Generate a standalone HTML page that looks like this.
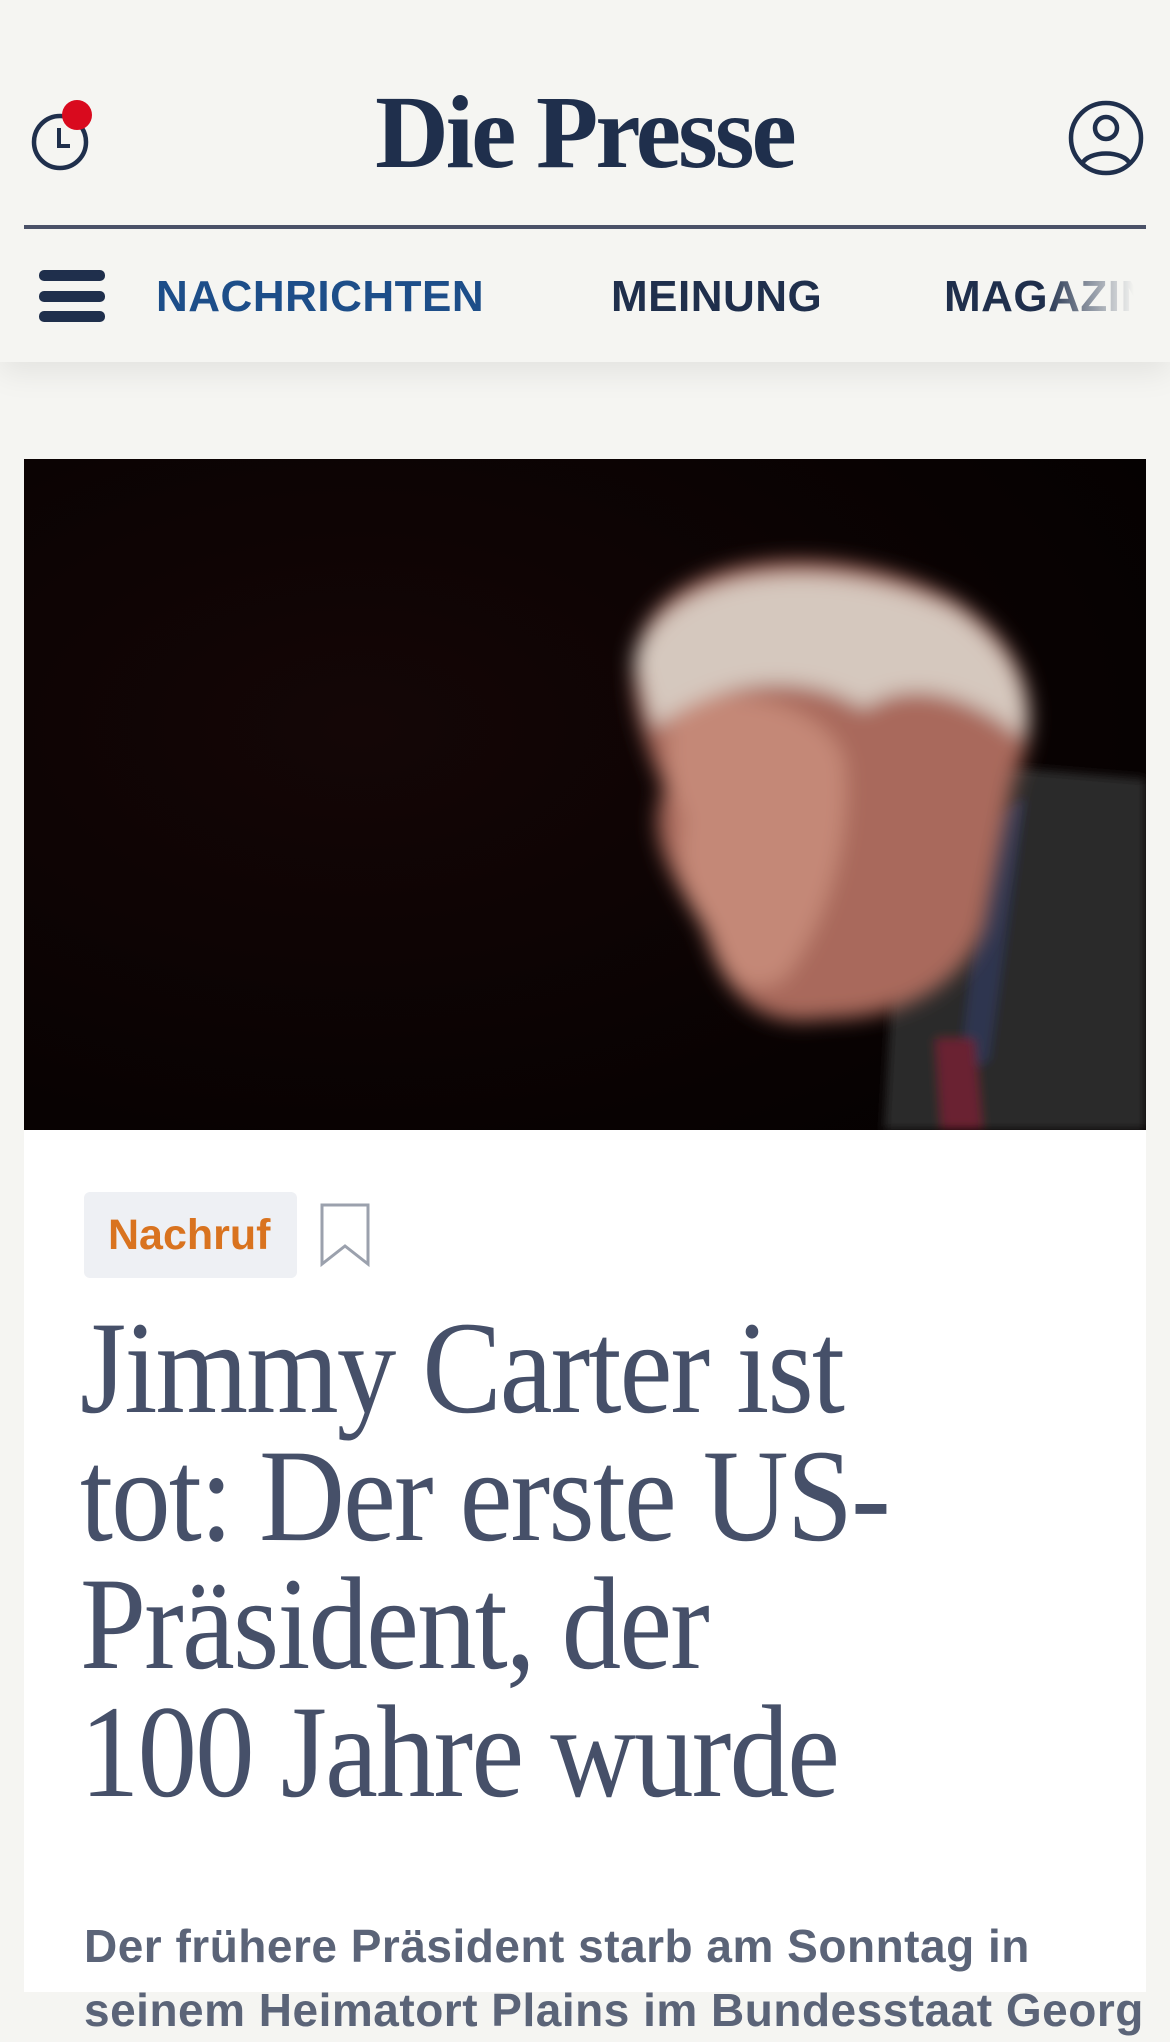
<!DOCTYPE html>
<html><head><meta charset="utf-8"><style>
*{margin:0;padding:0;box-sizing:border-box}
body{width:1170px;height:1992px;overflow:hidden;background:#f5f5f2;font-family:"Liberation Sans",sans-serif;position:relative}
.hdr{position:absolute;left:0;top:0;width:1170px;height:362px;background:#f5f5f2;box-shadow:0 10px 30px rgba(0,0,0,0.08)}
.logo{position:absolute;left:272px;top:78px;width:625px;text-align:center;white-space:nowrap;font-family:"Liberation Serif",serif;font-weight:bold;font-size:104px;color:#1f2f4c;letter-spacing:-3px;transform:scaleX(0.98);transform-origin:center;line-height:110px}
.rule{position:absolute;left:24px;top:225px;width:1122px;height:4px;background:#4a5168}
.nav{position:absolute;top:270px;font-weight:bold;font-size:44px;line-height:54px;letter-spacing:0.5px}
.card{position:absolute;left:24px;top:1130px;width:1122px;height:862px;background:#fff}
.tag{position:absolute;left:84px;top:1192px;width:213px;height:86px;border-radius:6px;background:#eef0f4;color:#d9731f;font-weight:bold;font-size:43px;line-height:86px;padding-left:24px}
h1{position:absolute;left:80px;top:1304px;font-family:"Liberation Serif",serif;font-weight:normal;font-size:132px;line-height:128px;color:#465069;letter-spacing:-2px;transform:scaleX(0.9);transform-origin:left;width:1000px;white-space:nowrap}
.sub{position:absolute;left:84px;top:1914px;font-size:46px;line-height:64px;color:#5b6478;font-weight:bold;width:1062px;overflow:hidden;letter-spacing:0.5px;white-space:nowrap}
</style></head><body>
<div class="hdr">
 <svg style="position:absolute;left:28px;top:98px" width="70" height="80" viewBox="0 0 70 80">
  <circle cx="32" cy="44" r="26" fill="none" stroke="#1f2f4c" stroke-width="4.5"/>
  <path d="M31 30 V48 H42" fill="none" stroke="#1f2f4c" stroke-width="4"/>
  <circle cx="49" cy="17" r="15" fill="#d90a1e"/>
 </svg>
 <div class="logo">Die Presse</div>
 <svg style="position:absolute;left:1066px;top:98px" width="80" height="80" viewBox="0 0 80 80">
  <circle cx="40" cy="40" r="35" fill="none" stroke="#1f2f4c" stroke-width="4.5"/>
  <circle cx="40" cy="30" r="11" fill="none" stroke="#1f2f4c" stroke-width="4.5"/>
  <path d="M16 66 C22 52 58 52 64 66" fill="none" stroke="#1f2f4c" stroke-width="4.5"/>
 </svg>
 <div class="rule"></div>
 <svg style="position:absolute;left:39px;top:268px" width="68" height="56">
  <rect x="0" y="2" width="66" height="11" rx="5" fill="#1f2f4c"/>
  <rect x="0" y="23" width="66" height="11" rx="5" fill="#1f2f4c"/>
  <rect x="0" y="43" width="66" height="11" rx="5" fill="#1f2f4c"/>
 </svg>
 <div class="nav" style="left:156px;color:#1d4e89">NACHRICHTEN</div>
 <div class="nav" style="left:611px;color:#1f2f4c">MEINUNG</div>
 <div class="nav" style="left:944px;color:#1f2f4c;width:200px;overflow:hidden;white-space:nowrap;-webkit-mask-image:linear-gradient(to right,#000 50%,transparent 95%)">MAGAZIN</div>
</div>
<svg style="position:absolute;left:24px;top:459px" width="1122" height="671" viewBox="0 0 1122 671">
 <defs>
  <filter id="b"><feGaussianBlur stdDeviation="10"/></filter>
  <filter id="b2"><feGaussianBlur stdDeviation="5"/></filter>
  <radialGradient id="bg" cx="0.3" cy="0.4" r="0.8"><stop offset="0" stop-color="#140606"/><stop offset="1" stop-color="#050101"/></radialGradient>
 </defs>
 <rect width="1122" height="671" fill="url(#bg)"/>
 <g filter="url(#b2)">
  <path d="M880 300 L1122 320 L1122 671 L860 671 Z" fill="#2c2b2b"/>
  <path d="M965 360 L1000 340 L965 600 L935 620 Z" fill="#2e3550"/>
  <path d="M912 580 L950 580 L958 671 L918 671 Z" fill="#6a2430"/>
 </g>
 <g filter="url(#b)">
  <path d="M620 170 C660 90 820 80 930 140 C1010 190 1020 260 990 320 L960 470 C930 540 860 560 800 560 C740 570 700 540 680 470 C650 420 620 380 640 330 C610 260 600 210 620 170 Z" fill="#a9695c"/>
  <path d="M650 250 C690 220 800 240 820 300 C830 380 800 470 760 520 C720 540 700 520 690 480 C660 440 650 400 660 360 C640 320 640 280 650 250 Z" fill="#c48877"/>
  <path d="M610 200 C640 110 800 90 930 150 C990 190 1010 240 1000 280 C940 230 880 220 840 250 C780 210 690 220 630 270 Z" fill="#d5c8be"/>
 </g>
</svg>
<div class="card"></div>
<div class="tag">Nachruf</div>
<svg style="position:absolute;left:319px;top:1202px" width="54" height="66" viewBox="0 0 54 66">
 <path d="M3 3 H49 V62 L26 44 L3 62 Z" fill="none" stroke="#9ba1ad" stroke-width="3"/>
</svg>
<h1>Jimmy Carter ist<br>tot: Der erste US-<br>Präsident, der<br>100 Jahre wurde</h1>
<div class="sub">Der frühere Präsident starb am Sonntag in<br>seinem Heimatort Plains im Bundesstaat Georgia. Der</div>
</body></html>
